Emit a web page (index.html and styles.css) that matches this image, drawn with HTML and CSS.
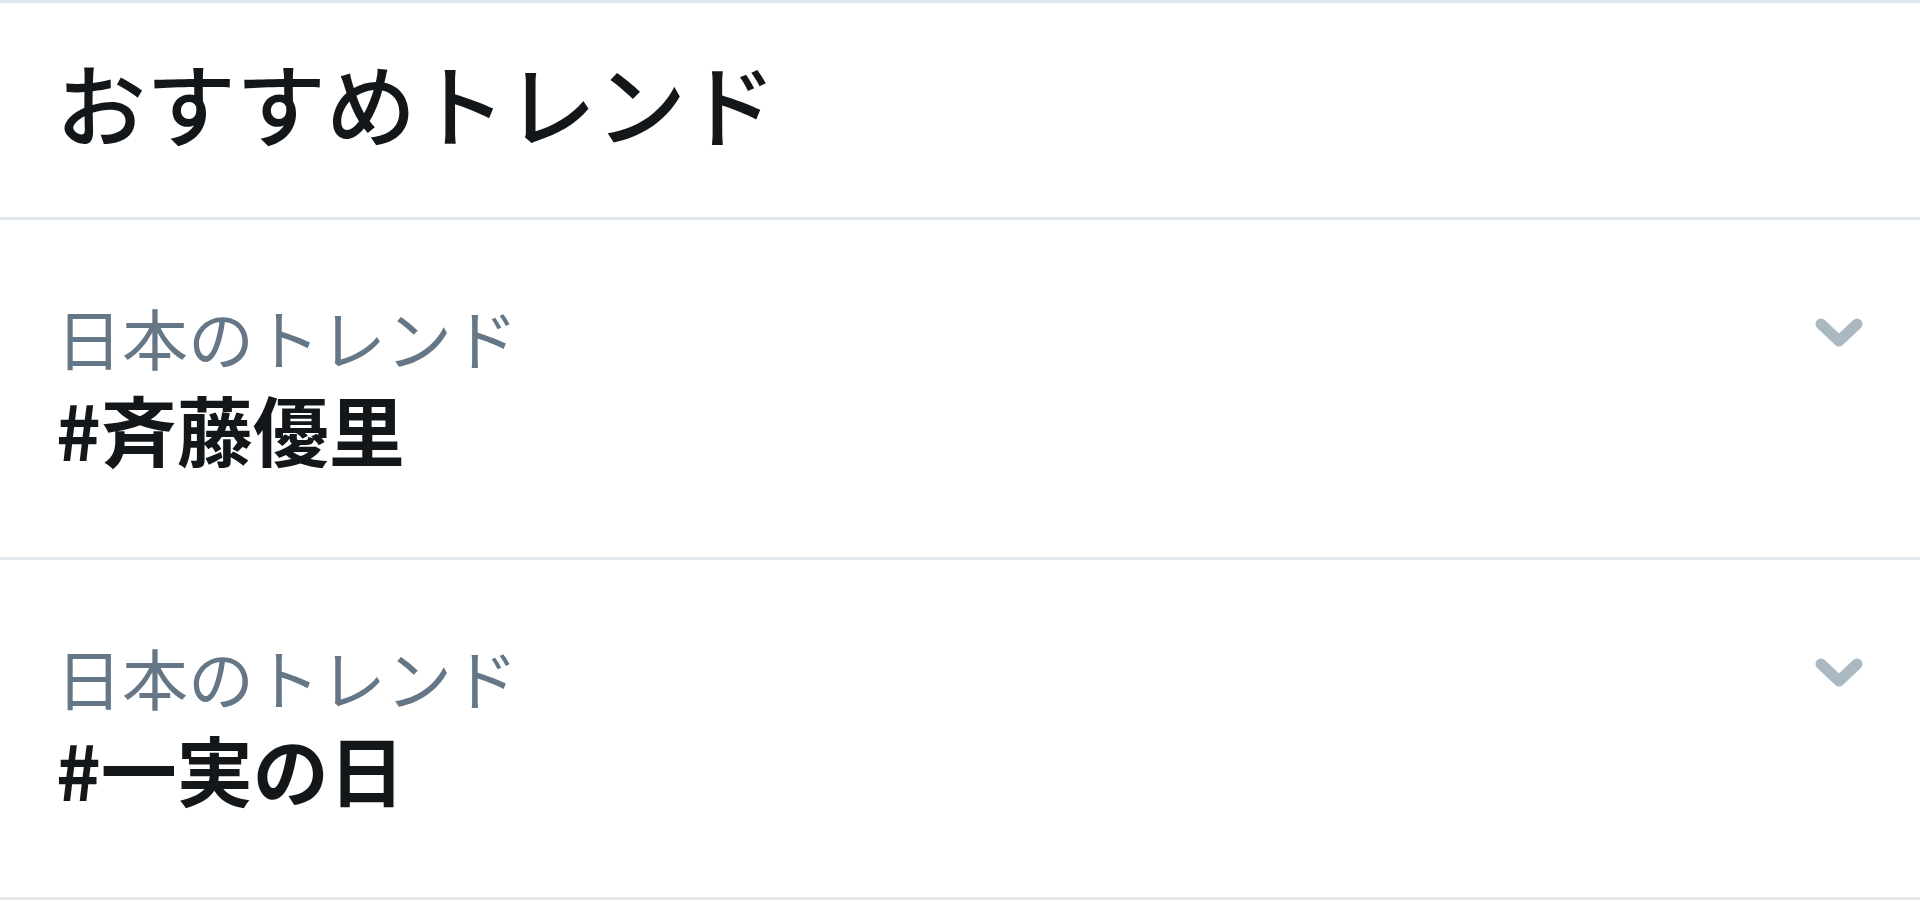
FILE: index.html
```html
<!DOCTYPE html>
<html lang="ja">
<head>
    <meta charset="UTF-8">
    <meta name="viewport" content="width=device-width, initial-scale=1.0">
    <title>おすすめトレンド</title>
    <link rel="stylesheet" href="styles.css">
</head>
<body>
    <div class="trends">
        <div class="trends-header">
            <h2>おすすめトレンド</h2>
        </div>

        <div class="trend-item">
            <div class="trend-text">
                <div class="trend-context">日本のトレンド</div>
                <div class="trend-name">#斉藤優里</div>
            </div>
            <svg class="trend-caret" width="48" height="30" viewBox="0 0 48 30">
                <polyline points="6,6 24,23 42,6" />
            </svg>
        </div>

        <div class="trend-item">
            <div class="trend-text">
                <div class="trend-context">日本のトレンド</div>
                <div class="trend-name">#一実の日</div>
            </div>
            <svg class="trend-caret" width="48" height="30" viewBox="0 0 48 30">
                <polyline points="6,6 24,23 42,6" />
            </svg>
        </div>
    </div>
</body>
</html>
```

FILE: styles.css
```css
body {
    margin: 0;
    background: #fff;
    font-family: "Noto Sans CJK JP", "Noto Sans", sans-serif;
    color: #14171a;
}
.trends {
    border-top: 3px solid #dfe5ec;
}
.trends-header {
    padding: 40px 56px 0;
    height: 174px;
    border-bottom: 3px solid #e1e8ed;
}
.trends-header h2 {
    margin: 0;
    font-size: 90px;
    line-height: 1.3;
    font-weight: 500;
}
.trend-item {
    display: flex;
    justify-content: space-between;
    align-items: flex-start;
    padding: 74px 57px 0 56px;
    height: 263px;
    border-bottom: 3px solid #e3e8ec;
}
.trend-context {
    font-size: 66px;
    line-height: 1.3;
    font-weight: 400;
    color: #657786;
}
.trend-name {
    font-size: 76px;
    line-height: 1.28;
    font-weight: 700;
}
.trend-caret {
    margin-top: 24px;
    fill: none;
    stroke: #aab8c2;
    stroke-width: 11;
    stroke-linecap: round;
    stroke-linejoin: round;
}
```
